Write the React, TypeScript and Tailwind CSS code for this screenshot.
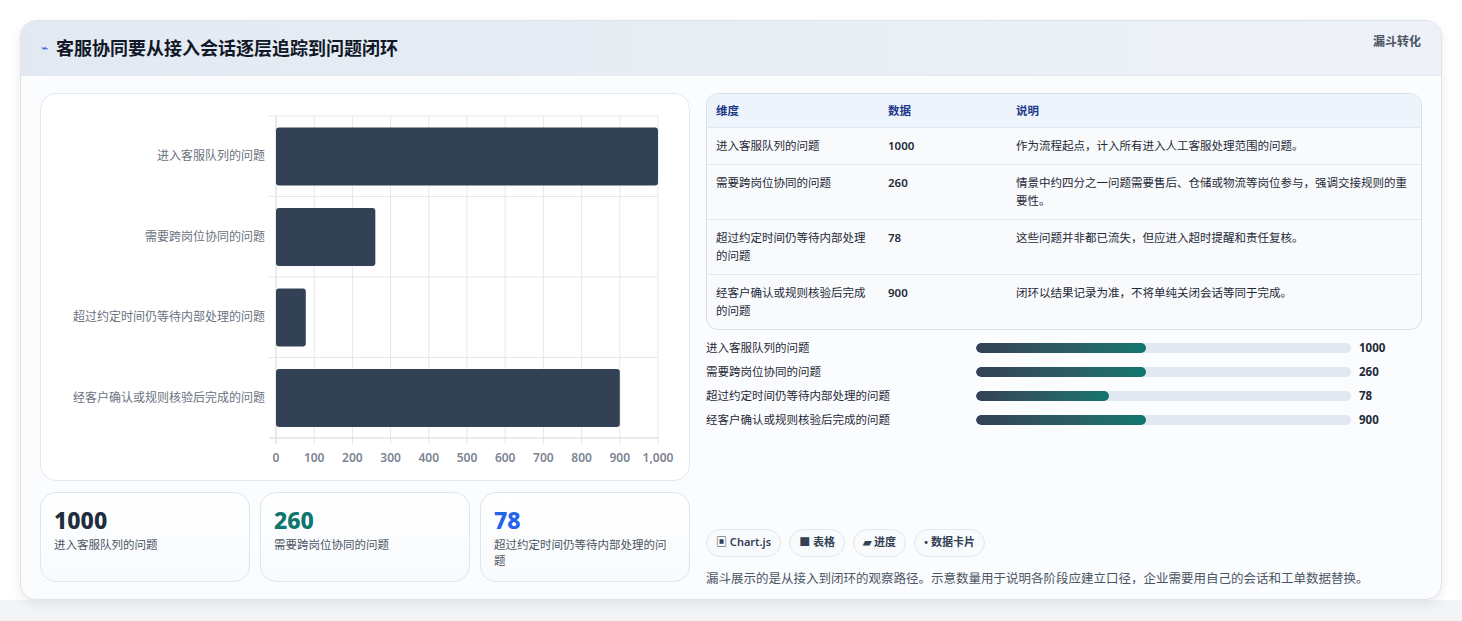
import React from "react";

const rows = [
  { name: "进入客服队列的问题", v: 1000, desc: "作为流程起点，计入所有进入人工客服处理范围的问题。", fill: 170 },
  { name: "需要跨岗位协同的问题", v: 260, desc: "情景中约四分之一问题需要售后、仓储或物流等岗位参与，强调交接规则的重要性。", fill: 170 },
  { name: "超过约定时间仍等待内部处理的问题", v: 78, desc: "这些问题并非都已流失，但应进入超时提醒和责任复核。", fill: 133 },
  { name: "经客户确认或规则核验后完成的问题", v: 900, desc: "闭环以结果记录为准，不将单纯关闭会话等同于完成。", fill: 170 },
];

function Chart() {
  const L = 235, R = 617, T = 22, B = 344;
  const rh = (B - T) / 4;
  const sx = (v: number) => L + ((R - L) * v) / 1000;
  return (
    <svg width="648" height="385" className="block">
      {Array.from({ length: 11 }).map((_, i) => (
        <line key={i} x1={sx(i * 100)} x2={sx(i * 100)} y1={T} y2={B + 6} stroke={i === 0 ? "#d1d5db" : "#e5e7eb"} strokeWidth="1" />
      ))}
      {Array.from({ length: 5 }).map((_, i) => (
        <line key={i} x1={L - 7} x2={R} y1={T + rh * i} y2={T + rh * i} stroke={i === 4 ? "#d1d5db" : "#e5e7eb"} strokeWidth="1" />
      ))}
      {rows.map((r, i) => (
        <g key={i}>
          <rect x={L} y={T + rh * i + 11.5} width={sx(r.v) - L} height={58} rx="3" fill="#334155" />
          <text x={L - 11} y={T + rh * i + rh / 2 + 4} textAnchor="end" fontSize="12" fill="#6b7280">{r.name}</text>
        </g>
      ))}
      {Array.from({ length: 11 }).map((_, i) => (
        <text key={i} x={sx(i * 100)} y={368} textAnchor="middle" fontSize="12" fontWeight="600" fill="#7b8494">
          {i === 10 ? "1,000" : i * 100}
        </text>
      ))}
    </svg>
  );
}

export default function App() {
  return (
    <div className="w-[1462px] h-[621px] bg-[#f3f4f6] flex flex-col" style={{ fontFamily: '"Noto Sans", "Noto Sans CJK SC", sans-serif' }}>
      <div className="bg-white h-[600px] pt-5 px-5">
        <div className="h-[580px] rounded-2xl border border-[#dfe3ea] shadow-[0_4px_12px_rgba(0,0,0,0.08)] bg-[#fbfcfe] overflow-hidden flex flex-col">
          <div className="h-[55px] shrink-0 bg-gradient-to-r from-[#e3e9f2] to-[#eef2f8] flex items-center justify-between px-5 border-b border-[#e5e9f0]">
            <div className="flex items-center gap-2">
              <span className="text-[#3b5bdb] text-[12px]">⌁</span>
              <span className="text-[18px] font-bold text-[#111827]">客服协同要从接入会话逐层追踪到问题闭环</span>
            </div>
            <span className="text-[12px] font-semibold text-[#4b5563] self-start mt-3">漏斗转化</span>
          </div>
          <div className="flex gap-4 px-[19px] pt-[17px]">
            <div className="w-[650px] flex flex-col gap-[11px]">
              <div className="h-[388px] rounded-2xl border border-[#e2e8f0] bg-white overflow-hidden">
                <Chart />
              </div>
              <div className="grid grid-cols-3 gap-[10px]">
                {[
                  { v: "1000", c: "text-[#1f2d3d]", l: "进入客服队列的问题" },
                  { v: "260", c: "text-[#0f766e]", l: "需要跨岗位协同的问题" },
                  { v: "78", c: "text-[#2563eb]", l: "超过约定时间仍等待内部处理的问题" },
                ].map((s, i) => (
                  <div key={i} className="h-[90px] rounded-2xl border border-[#dbe6f3] bg-gradient-to-b from-white to-[#f8fafc] px-[13px] pt-[12px]">
                    <div className={`text-[23px] font-extrabold leading-[30px] ${s.c}`}>{s.v}</div>
                    <div className="text-[11.5px] text-[#4b5563] leading-[16px] mt-[2px]">{s.l}</div>
                  </div>
                ))}
              </div>
            </div>
            <div className="flex-1 flex flex-col">
              <div className="rounded-xl border border-[#d6e0ec] overflow-hidden bg-[#f8fafc]">
                <table className="w-full text-[11.5px] text-[#1f2937] border-collapse">
                  <thead>
                    <tr className="bg-[#eef4fc] h-[33px] text-[#1e3a8a] font-semibold text-left">
                      <th className="pl-[9px] w-[181px] font-semibold">维度</th>
                      <th className="w-[128px] font-semibold">数据</th>
                      <th className="font-semibold">说明</th>
                    </tr>
                  </thead>
                  <tbody>
                    {rows.map((r, i) => (
                      <tr key={i} className="border-t border-[#e2e8f0] align-top">
                        <td className="pl-[9px] pr-3 py-[9px] leading-[18px]">{r.name}</td>
                        <td className="py-[9px] leading-[18px] font-semibold">{r.v}</td>
                        <td className="py-[9px] pr-2 leading-[18px]">{r.desc}</td>
                      </tr>
                    ))}
                  </tbody>
                </table>
              </div>
              <div className="flex flex-col gap-[8px] mt-[10px]">
                {rows.map((r, i) => (
                  <div key={i} className="flex items-center h-[16px] text-[11.5px] text-[#1f2937]">
                    <div className="w-[270px]">{r.name}</div>
                    <div className="w-[375px] h-[10px] rounded-full bg-[#e2e8f0] overflow-hidden">
                      <div className="h-full rounded-full bg-gradient-to-r from-[#334155] to-[#0f766e]" style={{ width: r.fill }} />
                    </div>
                    <div className="ml-[8px] font-bold">{r.v}</div>
                  </div>
                ))}
              </div>
              <div className="flex gap-2 mt-[101px]">
                {["▣ Chart.js", "■ 表格", "▰ 进度", "• 数据卡片"].map((c, i) => (
                  <span key={i} className="h-[28px] px-[9px] flex items-center rounded-full border border-[#e2e8f0] bg-[#f8fafc] text-[11px] font-semibold text-[#334155]">{c}</span>
                ))}
              </div>
              <div className="mt-[13px] text-[12.5px] text-[#4b5563]">漏斗展示的是从接入到闭环的观察路径。示意数量用于说明各阶段应建立口径，企业需要用自己的会话和工单数据替换。</div>
            </div>
          </div>
        </div>
      </div>
    </div>
  );
}
